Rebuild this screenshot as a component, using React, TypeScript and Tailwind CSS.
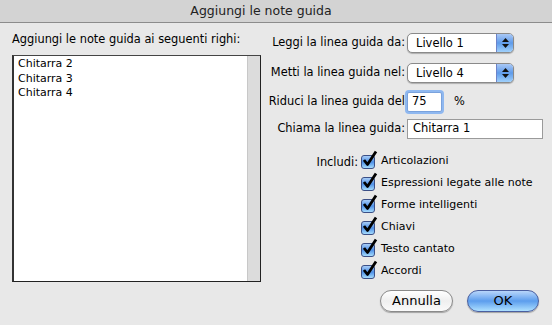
import React from "react";

const font = { fontFamily: '"DejaVu Sans", "Liberation Sans", sans-serif' };

const Popup = ({ value }: { value: string }) => (
  <div className="flex h-[20px] w-[107px] items-stretch overflow-hidden rounded-[5px] border border-[#8a8a8a] bg-white shadow-[0_1px_1px_rgba(0,0,0,0.25)]">
    <div className="flex-1 pl-[8px] text-[11.5px] leading-[18px] text-black">{value}</div>
    <div className="flex w-[17px] flex-col items-center justify-center gap-[2px] border-l border-[#6d83c9] bg-gradient-to-b from-[#a9c8f5] via-[#5f9bea] to-[#9fd0fb]">
      <svg width="7" height="4" viewBox="0 0 7 4"><path d="M0 4 L3.5 0 L7 4 Z" fill="#111" /></svg>
      <svg width="7" height="4" viewBox="0 0 7 4"><path d="M0 0 L3.5 4 L7 0 Z" fill="#111" /></svg>
    </div>
  </div>
);

const Check = ({ label }: { label: string }) => (
  <div className="flex h-[22px] items-center">
    <div className="relative h-[15px] w-[15px]">
      <div className="absolute bottom-0 left-0 h-[14px] w-[14px] rounded-[3px] border border-[#3b4f86] bg-gradient-to-b from-[#a8cdf7] via-[#4d8fe6] to-[#a6dcfd]" />
      <svg className="absolute -top-[4px] left-[1px]" width="16" height="17" viewBox="0 0 16 17">
        <path d="M2 10 L5.5 14.5 L14 1.5" stroke="#000" strokeWidth="2.8" fill="none" strokeLinejoin="round" />
      </svg>
    </div>
    <span className="ml-[5px] text-[11px] text-black">{label}</span>
  </div>
);

export default function App() {
  return (
    <div className="h-[325px] w-[552px] overflow-hidden bg-[#e8e8e8]" style={font}>
      {/* title bar */}
      <div className="flex h-[23px] items-center justify-center border-b border-[#8c8c8c] bg-[#d3d3d3] pr-[30px] text-[12.5px] text-[#222]">
        Aggiungi le note guida
      </div>

      <div className="flex">
        {/* left column */}
        <div className="ml-[12px] w-[249px]">
          <div className="mt-[9px] h-[23px] text-[11.4px] leading-[14px] text-black">
            Aggiungi le note guida ai seguenti righi:
          </div>
          <div className="flex h-[227px] border-l-2 border-t border-b border-r border-l-[#333] border-t-[#444] border-b-[#222] border-r-[#222] bg-white">
            <div className="flex-1 pl-[4px] pt-[1px] text-[11px] leading-[14.5px] text-black">
              <div>Chitarra 2</div>
              <div>Chitarra 3</div>
              <div>Chitarra 4</div>
            </div>
            <div className="w-[13px] border-l border-[#c8c8c8] bg-[#dcdcdc]" />
          </div>
        </div>

        {/* right column */}
        <div className="ml-[4px] flex flex-1 flex-col text-[11.4px] text-black">
          <div className="mt-[10px] flex items-center">
            <div className="w-[142px] pr-[2px] text-right">Leggi la linea guida da:</div>
            <Popup value="Livello 1" />
          </div>
          <div className="mt-[10px] flex items-center">
            <div className="w-[142px] pr-[2px] text-right">Metti la linea guida nel:</div>
            <Popup value="Livello 4" />
          </div>
          <div className="mt-[9px] flex items-center">
            <div className="w-[142px] pr-[2px] text-right">Riduci la linea guida del</div>
            <div className="flex h-[20px] w-[35px] items-center rounded-[2px] border border-[#7aa2dc] bg-white pl-[4px] text-[11.5px] shadow-[0_0_0_2px_#8fb8f0]">
              75
            </div>
            <span className="ml-[12px]">%</span>
          </div>
          <div className="mt-[7px] flex items-center">
            <div className="w-[142px] pr-[2px] text-right">Chiama la linea guida:</div>
            <div className="flex h-[20px] w-[136px] items-center border border-[#9a9a9a] bg-white pl-[5px] text-[11.5px]">
              Chitarra 1
            </div>
          </div>

          <div className="mt-[11px] flex">
            <div className="w-[96px] pr-[3px] pt-[4px] text-right">Includi:</div>
            <div className="flex flex-col">
              <Check label="Articolazioni" />
              <Check label="Espressioni legate alle note" />
              <Check label="Forme intelligenti" />
              <Check label="Chiavi" />
              <Check label="Testo cantato" />
              <Check label="Accordi" />
            </div>
          </div>

          <div className="mt-[8px] flex justify-end gap-[14px] pr-[13px]">
            <button className="h-[22px] w-[73px] rounded-full border border-[#8a8a8a] bg-gradient-to-b from-white via-[#efefef] to-[#fafafa] text-[13px] text-black shadow-[0_1px_1px_rgba(0,0,0,0.3)]">
              Annulla
            </button>
            <button className="h-[22px] w-[72px] rounded-full border border-[#4a5fa0] bg-gradient-to-b from-[#b8d6fa] via-[#5c9ded] to-[#aee0fe] text-[13px] text-black shadow-[0_1px_1px_rgba(0,0,0,0.3)]">
              OK
            </button>
          </div>
        </div>
      </div>
    </div>
  );
}
